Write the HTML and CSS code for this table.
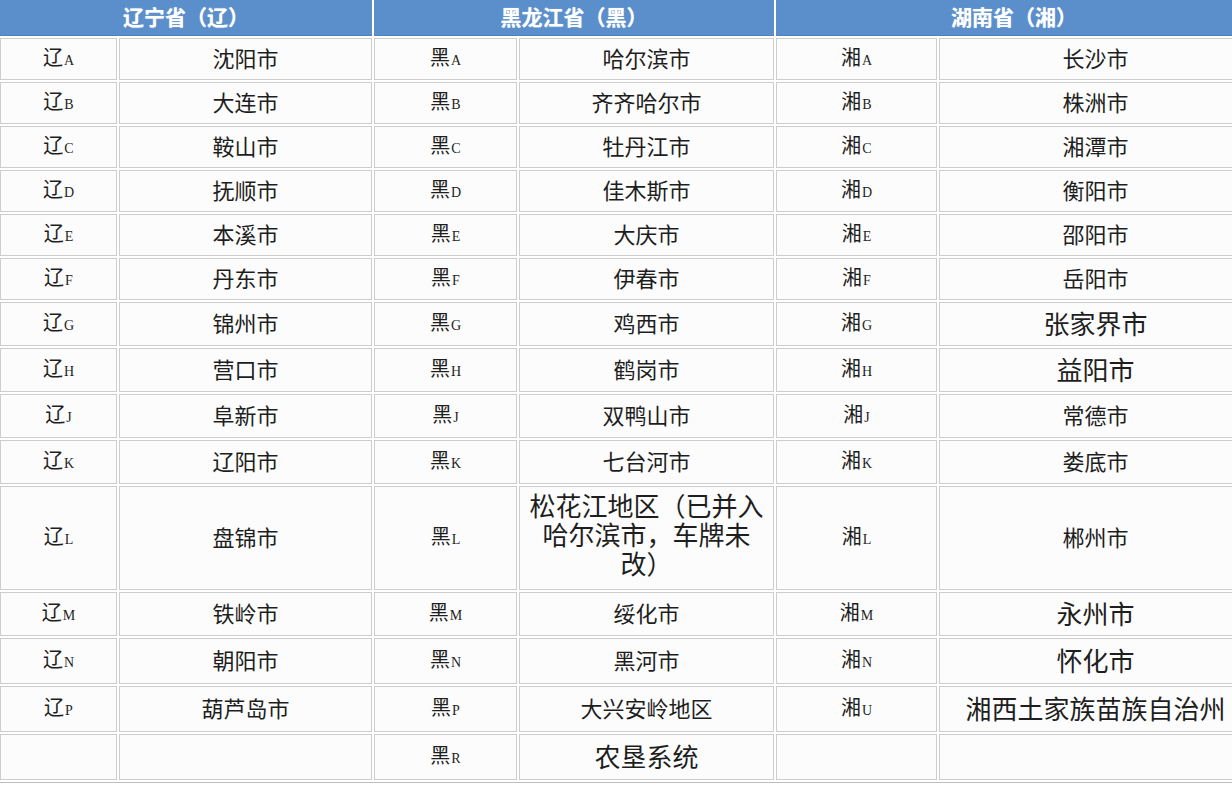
FILE: index.html
```html
<!DOCTYPE html>
<html lang="zh">
<head>
<meta charset="utf-8">
<title>车牌代码</title>
<link rel="stylesheet" href="styles.css">
</head>
<body>
<div class="wrap">
<table class="plates">
<colgroup>
<col class="c1"><col class="c2"><col class="c3"><col class="c4"><col class="c5"><col class="c6">
</colgroup>
<thead>
<tr class="head"><th colspan="2">辽宁省（辽）</th><th colspan="2">黑龙江省（黑）</th><th colspan="2">湖南省（湘）</th></tr>
</thead>
<tbody>
<tr class="r42"><td class="code">辽<span class="l">A</span></td><td>沈阳市</td><td class="code">黑<span class="l">A</span></td><td>哈尔滨市</td><td class="code">湘<span class="l">A</span></td><td>长沙市</td></tr>
<tr class="r42"><td class="code">辽<span class="l">B</span></td><td>大连市</td><td class="code">黑<span class="l">B</span></td><td>齐齐哈尔市</td><td class="code">湘<span class="l">B</span></td><td>株洲市</td></tr>
<tr class="r42"><td class="code">辽<span class="l">C</span></td><td>鞍山市</td><td class="code">黑<span class="l">C</span></td><td>牡丹江市</td><td class="code">湘<span class="l">C</span></td><td>湘潭市</td></tr>
<tr class="r42"><td class="code">辽<span class="l">D</span></td><td>抚顺市</td><td class="code">黑<span class="l">D</span></td><td>佳木斯市</td><td class="code">湘<span class="l">D</span></td><td>衡阳市</td></tr>
<tr class="r42"><td class="code">辽<span class="l">E</span></td><td>本溪市</td><td class="code">黑<span class="l">E</span></td><td>大庆市</td><td class="code">湘<span class="l">E</span></td><td>邵阳市</td></tr>
<tr class="r42"><td class="code">辽<span class="l">F</span></td><td>丹东市</td><td class="code">黑<span class="l">F</span></td><td>伊春市</td><td class="code">湘<span class="l">F</span></td><td>岳阳市</td></tr>
<tr class="r44"><td class="code">辽<span class="l">G</span></td><td>锦州市</td><td class="code">黑<span class="l">G</span></td><td>鸡西市</td><td class="code">湘<span class="l">G</span></td><td class="big">张家界市</td></tr>
<tr class="r44"><td class="code">辽<span class="l">H</span></td><td>营口市</td><td class="code">黑<span class="l">H</span></td><td>鹤岗市</td><td class="code">湘<span class="l">H</span></td><td class="big">益阳市</td></tr>
<tr class="r44"><td class="code">辽<span class="l">J</span></td><td>阜新市</td><td class="code">黑<span class="l">J</span></td><td>双鸭山市</td><td class="code">湘<span class="l">J</span></td><td>常德市</td></tr>
<tr class="r44"><td class="code">辽<span class="l">K</span></td><td>辽阳市</td><td class="code">黑<span class="l">K</span></td><td>七台河市</td><td class="code">湘<span class="l">K</span></td><td>娄底市</td></tr>
<tr class="r104"><td class="code">辽<span class="l">L</span></td><td>盘锦市</td><td class="code">黑<span class="l">L</span></td><td class="multi"><span class="ln">松花江地区（已并入</span><span class="ln">哈尔滨市，车牌未</span><span class="ln">改）</span></td><td class="code">湘<span class="l">L</span></td><td>郴州市</td></tr>
<tr class="r44"><td class="code">辽<span class="l">M</span></td><td>铁岭市</td><td class="code">黑<span class="l">M</span></td><td>绥化市</td><td class="code">湘<span class="l">M</span></td><td class="big">永州市</td></tr>
<tr class="r46"><td class="code">辽<span class="l">N</span></td><td>朝阳市</td><td class="code">黑<span class="l">N</span></td><td>黑河市</td><td class="code">湘<span class="l">N</span></td><td class="big">怀化市</td></tr>
<tr class="r46"><td class="code">辽<span class="l">P</span></td><td>葫芦岛市</td><td class="code">黑<span class="l">P</span></td><td>大兴安岭地区</td><td class="code">湘<span class="l">U</span></td><td class="big">湘西土家族苗族自治州</td></tr>
<tr class="r46"><td class="code"></td><td></td><td class="code">黑<span class="l">R</span></td><td class="big">农垦系统</td><td class="code"></td><td></td></tr>
</tbody>
</table>
</div>
</body>
</html>
```

FILE: styles.css
```css
html, body {
  margin: 0;
  padding: 0;
  background: #ffffff;
  overflow: hidden;
}

.wrap {
  width: 1232px;
  height: 788px;
  overflow: hidden;
  background: #ffffff;
}

.plates {
  table-layout: fixed;
  width: 1256px;
  margin-left: -2px;
  margin-top: -3px;
  border-collapse: separate;
  border-spacing: 2px;
  font-family: "Noto Sans CJK SC", "Noto Sans", sans-serif;
  color: #1e1e1e;
  border-bottom: 1px solid #bdbdbd;
}

.c1 { width: 117px; }
.c2 { width: 253px; }
.c3 { width: 143px; }
.c4 { width: 255px; }
.c5 { width: 161px; }
.c6 { width: 313px; }

.head th {
  height: 37px;
  padding: 0 0 2px;
  background: #5b8fcb;
  border-bottom: 1px solid #4f82bd;
  color: #ffffff;
  font-size: 21px;
  font-weight: 700;
  line-height: 34px;
  text-align: center;
  text-shadow: 0 0 1px rgba(255,255,255,0.6);
  box-sizing: border-box;
}

td {
  padding: 0 0 3px;
  border: 1px solid #cdcdcd;
  background: #fcfcfc;
  text-align: center;
  vertical-align: middle;
  font-size: 22px;
  line-height: 1.2;
  box-sizing: border-box;
}

td.code {
  font-size: 20px;
}

td .l {
  font-family: "Liberation Serif", "DejaVu Serif", serif;
  font-size: 14px;
  margin-left: 1px;
}

td.big {
  font-size: 26px;
}

td.multi {
  font-family: "Liberation Sans", "Noto Sans CJK SC", sans-serif;
  font-size: 26px;
  padding: 0 0 4px;
}

td.multi .ln {
  display: block;
  height: 29px;
  line-height: 29px;
  white-space: nowrap;
}

.r42 td { height: 42px; }
.r44 td { height: 44px; }
.r46 td { height: 46px; }
.r104 td { height: 104px; }
```
